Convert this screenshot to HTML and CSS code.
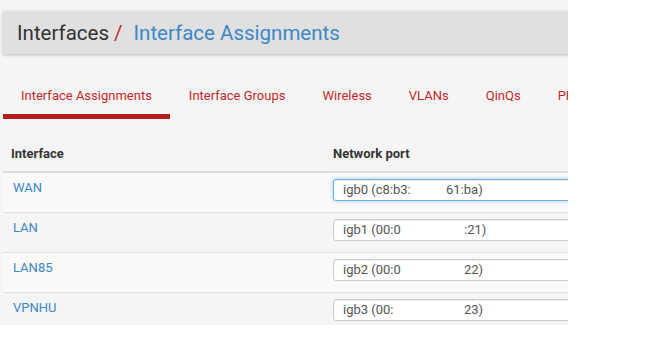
FILE: index.html
```html
<!DOCTYPE html>
<html lang="en">
<head>
    <meta charset="UTF-8">
    <title>Interfaces / Interface Assignments</title>
    <link rel="stylesheet" href="styles.css">
</head>
<body>
    <div class="page">
        <div class="page-header">
            <h1 class="breadcrumb">
                <span>Interfaces</span><span class="sep">/</span><a href="#" class="current">Interface Assignments</a>
            </h1>
        </div>

        <ul class="tabs">
            <li class="tab active"><a href="#">Interface Assignments</a></li>
            <li class="tab"><a href="#">Interface Groups</a></li>
            <li class="tab"><a href="#">Wireless</a></li>
            <li class="tab"><a href="#">VLANs</a></li>
            <li class="tab"><a href="#">QinQs</a></li>
            <li class="tab"><a href="#">PPPs</a></li>
        </ul>

        <table class="assign">
            <thead>
                <tr>
                    <th class="col-if">Interface</th>
                    <th>Network port</th>
                </tr>
            </thead>
            <tbody>
                <tr>
                    <td><a href="#">WAN</a></td>
                    <td>
                        <div class="select focus">
                            <span class="head short">igb0 (c8:b3:</span><span>61:ba)</span>
                        </div>
                    </td>
                </tr>
                <tr>
                    <td><a href="#">LAN</a></td>
                    <td>
                        <div class="select">
                            <span class="head">igb1 (00:0</span><span>:21)</span>
                        </div>
                    </td>
                </tr>
                <tr>
                    <td><a href="#">LAN85</a></td>
                    <td>
                        <div class="select">
                            <span class="head">igb2 (00:0</span><span>22)</span>
                        </div>
                    </td>
                </tr>
                <tr>
                    <td><a href="#">VPNHU</a></td>
                    <td>
                        <div class="select">
                            <span class="head">igb3 (00:</span><span>23)</span>
                        </div>
                    </td>
                </tr>
            </tbody>
        </table>
    </div>
</body>
</html>
```

FILE: styles.css
```css
body {
    margin: 0;
    background: #fff;
    font-family: Roboto, "Liberation Sans", sans-serif;
    color: #333;
}
a {
    text-decoration: none;
}
.page {
    width: 568px;
    height: 325px;
    box-sizing: border-box;
    padding: 11px 0 0 3px;
    overflow: hidden;
    background: #f5f5f5;
}
.page-header {
    width: 640px;
    height: 43px;
    box-sizing: border-box;
    padding-left: 14px;
    display: flex;
    align-items: center;
    background: #e0e0e0;
    box-shadow: 0 1px 3px rgba(0,0,0,0.25);
}
.breadcrumb {
    margin: 0;
    font-size: 20.5px;
    font-weight: normal;
    color: #333;
}
.breadcrumb .sep {
    color: #c62828;
    margin: 0 11px 0 5px;
}
.breadcrumb .current {
    color: #3d87c7;
}
.tabs {
    display: flex;
    list-style: none;
    margin: 32px 0 0;
    padding: 0;
    white-space: nowrap;
}
.tab a {
    display: block;
    padding: 0 18.5px 8px;
    line-height: 20px;
    font-size: 13px;
    color: #c62828;
    border-bottom: 5px solid transparent;
}
.tab:first-child a {
    padding-left: 18px;
}
.tab.active a {
    border-bottom-color: #b71c1c;
}
.assign {
    width: 640px;
    margin-top: 25px;
    border-collapse: collapse;
}
.assign th {
    text-align: left;
    font-size: 13px;
    font-weight: bold;
    color: #333;
    padding: 1px 8px 8px;
    line-height: 18px;
    border-bottom: 2px solid #ddd;
}
.assign .col-if {
    width: 306px;
}
.assign td {
    padding: 6px 8px 11px;
    border-top: 1px solid #ddd;
    vertical-align: top;
}
.assign tbody tr:nth-child(odd) {
    background: #f9f9f9;
}
.assign td a {
    display: block;
    padding-left: 2px;
    line-height: 18px;
    font-size: 13px;
    color: #3d87c7;
}
.select {
    display: flex;
    height: 22px;
    box-sizing: border-box;
    padding: 0 9px;
    line-height: 20px;
    font-size: 13px;
    color: #555;
    background: #fff;
    border: 1px solid #ccc;
    border-radius: 3px;
    box-shadow: inset 0 1px 1px rgba(0,0,0,0.075);
}
.select.focus {
    border-color: #66afe9;
    box-shadow: inset 0 1px 1px rgba(0,0,0,0.075), 0 0 4px rgba(102,175,233,0.6);
}
.select .head {
    width: 121px;
}
.select .head.short {
    width: 103px;
}
```
